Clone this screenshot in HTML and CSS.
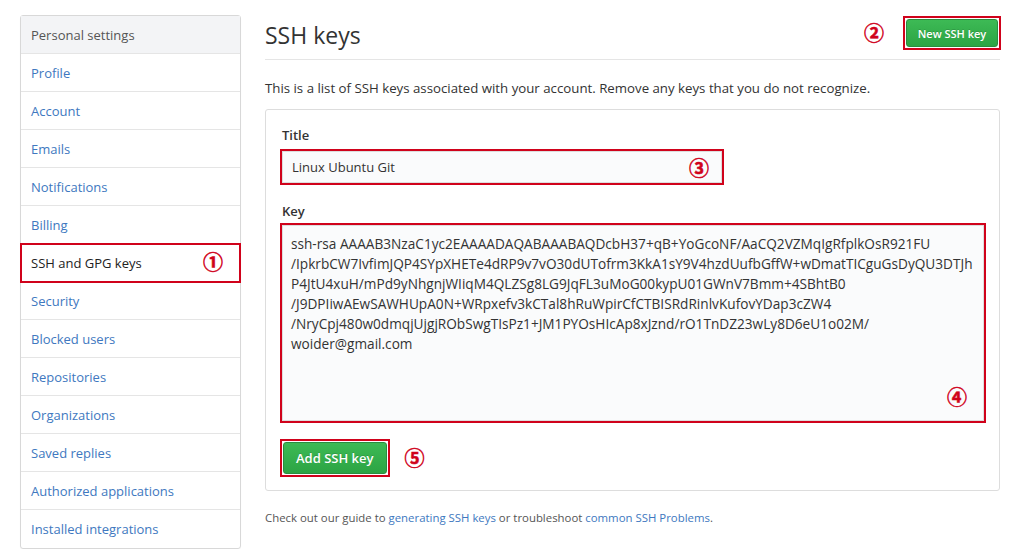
FILE: index.html
```html
<!DOCTYPE html>
<html>
<head>
<meta charset="utf-8">
<link rel="stylesheet" href="styles.css">
</head>
<body>
<div class="page">
  <nav class="menu">
    <div class="menu-head">Personal settings</div>
    <a class="menu-item">Profile</a>
    <a class="menu-item">Account</a>
    <a class="menu-item">Emails</a>
    <a class="menu-item">Notifications</a>
    <a class="menu-item">Billing</a>
    <a class="menu-item selected mark">SSH and GPG keys<span class="num num1">①</span></a>
    <a class="menu-item">Security</a>
    <a class="menu-item">Blocked users</a>
    <a class="menu-item">Repositories</a>
    <a class="menu-item">Organizations</a>
    <a class="menu-item">Saved replies</a>
    <a class="menu-item">Authorized applications</a>
    <a class="menu-item last">Installed integrations</a>
  </nav>
  <main class="main">
    <div class="subhead">
      <h2 class="title">SSH keys</h2>
      <div class="btn-wrap">
        <span class="num num2">②</span>
        <span class="btn-frame"><button class="btn btn-sm">New SSH key</button></span>
      </div>
    </div>
    <p class="lead">This is a list of SSH keys associated with your account. Remove any keys that you do not recognize.</p>
    <div class="box">
      <label class="label">Title</label>
      <div class="input mark">Linux Ubuntu Git<span class="num num3">③</span></div>
      <label class="label key-label">Key</label>
      <div class="textarea mark">ssh-rsa AAAAB3NzaC1yc2EAAAADAQABAAABAQDcbH37+qB+YoGcoNF/AaCQ2VZMqIgRfplkOsR921FU<br>/IpkrbCW7IvfimJQP4SYpXHETe4dRP9v7vO30dUTofrm3KkA1sY9V4hzdUufbGffW+wDmatTICguGsDyQU3DTJh<br>P4JtU4xuH/mPd9yNhgnjWIiqM4QLZSg8LG9JqFL3uMoG00kypU01GWnV7Bmm+4SBhtB0<br>/J9DPIiwAEwSAWHUpA0N+WRpxefv3kCTal8hRuWpirCfCTBISRdRinlvKufovYDap3cZW4<br>/NryCpj480w0dmqjUjgjRObSwgTIsPz1+JM1PYOsHIcAp8xJznd/rO1TnDZ23wLy8D6eU1o02M/<br>woider@gmail.com<span class="num num4">④</span></div>
      <div class="actions">
        <span class="btn-frame big"><button class="btn btn-lg">Add SSH key</button></span>
        <span class="num num5">⑤</span>
      </div>
    </div>
    <p class="help">Check out our guide to <a>generating SSH keys</a> or troubleshoot <a>common SSH Problems</a>.</p>
  </main>
</div>
</body>
</html>
```
FILE: styles.css
```css
* { box-sizing: border-box; }
body {
  margin: 0;
  background: #fff;
  font-family: "Open Sans", "Noto Sans", sans-serif;
  font-size: 13px;
  color: #333;
}
.page {
  display: flex;
  gap: 24px;
  padding: 15px 0 0 20px;
}
.menu {
  width: 221px;
  display: flex;
  flex-direction: column;
  border: 1px solid #d8d8d8;
  border-radius: 3px;
  box-shadow: 0 1px 1px rgba(0,0,0,0.04);
}
.menu-head {
  height: 38px;
  display: flex;
  align-items: center;
  padding-left: 10px;
  background: #f3f4f6;
  color: #555;
  border-bottom: 1px solid #e5e5e5;
}
.menu-item {
  position: relative;
  height: 38px;
  display: flex;
  align-items: center;
  padding-left: 10px;
  color: #4078c0;
  border-bottom: 1px solid #e5e5e5;
}
.menu-item.last { border-bottom: 0; }
.menu-item.selected { color: #222; }
.mark { outline: 2px solid #d0021b; }
.menu-item.mark { outline-offset: -1px; }
.num {
  position: absolute;
  font-family: "Noto Sans CJK SC", "DejaVu Sans", sans-serif;
  font-size: 20px;
  font-weight: bold;
  color: #d0021b;
  line-height: 1;
  -webkit-text-stroke: 0.5px #d0021b;
}
.num1 { left: 182px; top: 8px; }
.main {
  width: 735px;
}
.subhead {
  height: 45px;
  display: flex;
  align-items: flex-start;
  justify-content: space-between;
  padding-top: 1px;
  border-bottom: 1px solid #e5e5e5;
}
.title {
  margin: 3px 0 0;
  font-size: 23px;
  line-height: 32px;
  font-weight: normal;
  color: #333;
}
.btn-wrap {
  position: relative;
  display: flex;
  align-items: center;
  margin-right: -1px;
}
.num2 { position: static; margin-right: 19px; }
.btn-frame {
  display: inline-flex;
  padding: 1px;
  border: 2px solid #d0021b;
}
.btn {
  font-family: inherit;
  color: #fff;
  border: 1px solid #2a8c3e;
  border-radius: 3px;
  background: linear-gradient(#3dba55, #2ca444);
  font-weight: 600;
  text-shadow: 0 -1px 0 rgba(0,0,0,0.15);
}
.btn-sm {
  font-size: 11px;
  height: 28px;
  padding: 0 9px;
  width: 92px;
}
.btn-lg {
  font-size: 13px;
  height: 32px;
  padding: 0 12px;
}
.lead {
  margin: 19px 0 12px;
  font-size: 13.25px;
}
.box {
  border: 1px solid #ddd;
  border-radius: 3px;
  padding: 16px 15px 13px 16px;
}
.label {
  display: block;
  font-weight: 600;
  font-size: 13px;
  margin-bottom: 7px;
}
.input {
  position: relative;
  width: 440px;
  height: 32px;
  display: flex;
  align-items: center;
  padding-left: 9px;
  background: #fafbfc;
  border: 1px solid #ddd;
  font-size: 13px;
}
.num3 { right: 12px; top: 6px; }
.label.key-label { margin-top: 19px; margin-bottom: 5px; }
.textarea {
  position: relative;
  width: 702px;
  height: 196px;
  padding: 8px 8px;
  background: #fafbfc;
  border: 1px solid #ddd;
  font-size: 13.65px;
  line-height: 20px;
}
.num4 { right: 16px; bottom: 13px; }
.actions {
  position: relative;
  display: flex;
  align-items: center;
  margin-top: 18px;
  margin-left: -2px;
}
.btn-frame.big { padding: 1px; }
.num5 { position: static; margin-left: 15px; }
.help {
  margin: 19px 0 0;
  font-size: 11.4px;
  color: #555;
}
.help a { color: #4078c0; }
```
